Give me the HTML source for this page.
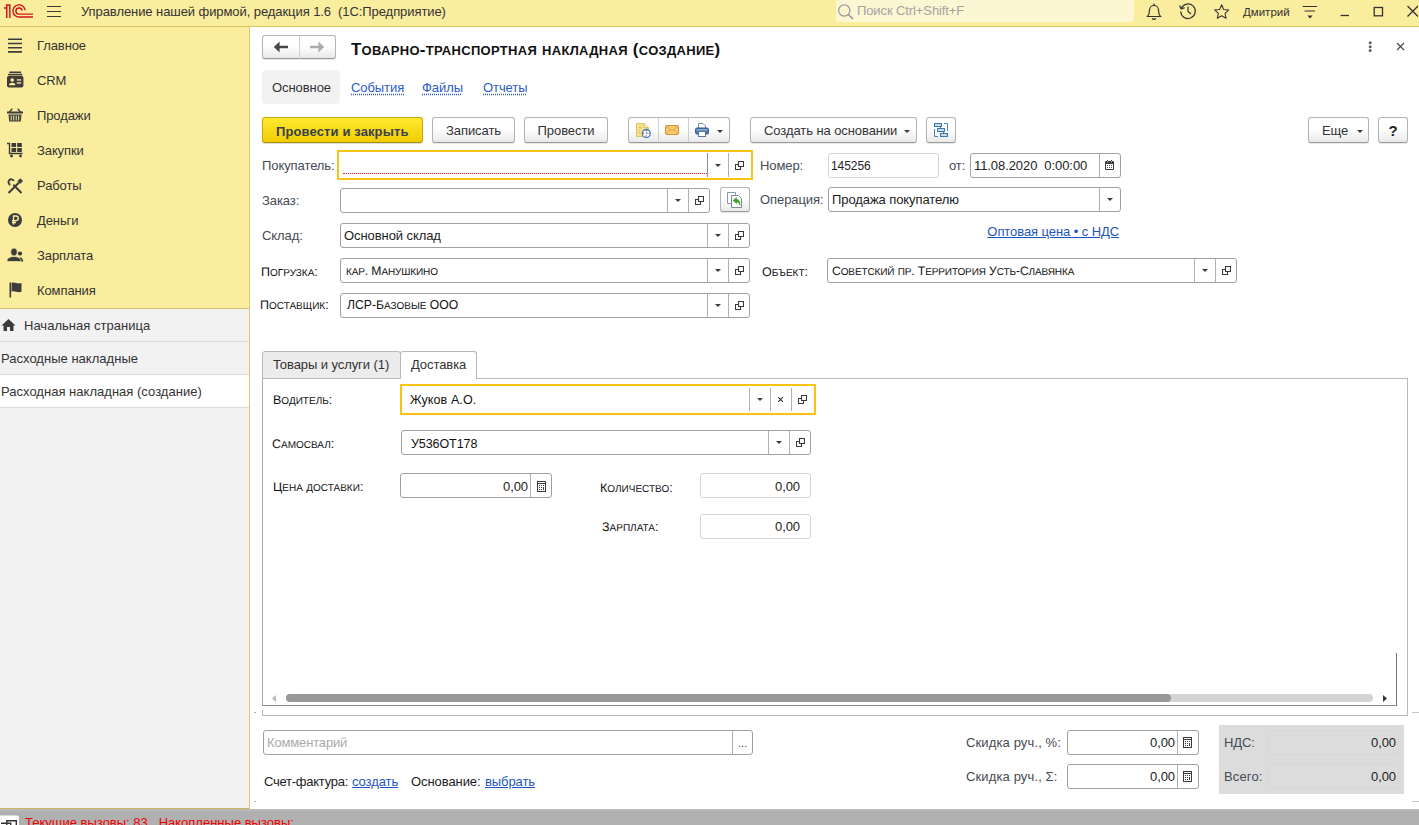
<!DOCTYPE html>
<html lang="ru"><head><meta charset="utf-8"><title>1C</title>
<style>
*{box-sizing:border-box;margin:0;padding:0}
html,body{width:1419px;height:825px;overflow:hidden;background:#fff}
body{font-family:"Liberation Sans",sans-serif;font-size:13px;color:#333;position:relative}
.a{position:absolute;white-space:nowrap}
#top{left:0;top:0;width:1419px;height:27px;background:#fbed9e;border-bottom:1px solid #d9c566}
#side{left:0;top:27px;width:249px;height:281px;background:#fbed9e}
#sideb{left:0;top:308px;width:250px;height:501px;background:#f2f2f2;border-top:1px solid #d2c27a;border-bottom:1px solid #c9b65e}
#sider{left:249px;top:27px;width:1px;height:782px;background:#dccb72}
#status{left:0;top:809px;width:1419px;height:16px;background:linear-gradient(#bdbdbd,#b0b0b0 3px)}
.mi{left:37px;font-size:13px;color:#333;line-height:16px;margin-top:1px;letter-spacing:-0.1px}
.wr{left:0;width:249px;height:33px;border-bottom:1px solid #dcdcdc;font-size:13px;line-height:34px;color:#333;letter-spacing:0.02px}
.inp{border:1px solid #a0a0a0;border-radius:3px;background:#fff;height:25px}
.btn{border:1px solid #b4b4b4;border-bottom-color:#9a9a9a;border-radius:3px;background:linear-gradient(#fff 0%,#fff 45%,#e9e9e9 100%);height:26px;font-size:13px;line-height:25px;text-align:center;color:#333;box-shadow:0 1px 1px rgba(0,0,0,0.10);letter-spacing:-0.08px}
.lnk{color:#1d55c0;text-decoration:underline;font-size:13px;line-height:16px}

.t{font-size:13px;line-height:16px;color:#333;letter-spacing:-0.08px}
.lb{color:#454a55}
.fv{color:#222}
.fvb{color:#111;font-size:12.500px}
.dl{color:#2a5bc8;text-decoration:underline dotted;text-underline-offset:2px}
.ul{color:#1d55c0;text-decoration:underline}
.dv{width:1px;background:#b0b0b0}
.scl{color:#111;font-size:10px;letter-spacing:0;text-transform:uppercase;text-rendering:geometricPrecision}
.scl .p,.scl .w::first-letter{font-size:12.500px}
.scv{color:#111;font-size:10px;letter-spacing:-0.12px;text-transform:uppercase;text-rendering:geometricPrecision}
.scv .p,.scv .w::first-letter{font-size:12.200px}
.w{display:inline-block}
.p{text-rendering:auto}
.ttl{font-size:12.320px;text-transform:uppercase;font-weight:bold;color:#111;line-height:20px;letter-spacing:0.3px;transform:scaleX(1.054);transform-origin:0 0}
.ttl .p,.ttl .w::first-letter{font-size:16px}
</style></head><body>
<div class="a" id="top"></div>
<div class="a" id="side"></div>
<div class="a" id="sideb"></div>
<div class="a" id="sider"></div>
<div class="a" id="status"></div>

<svg class="a" style="left:0;top:0" width="36" height="22" viewBox="0 0 36 22" fill="none" stroke="#d8131b" stroke-width="1.450"><path d="M3.900 7.900H6.750M6.750 4.900V18.100M9.850 4.900V18.100M5.900 4.900H10.700"/><path d="M25 10.300A6.050 6.050 0 1 0 18.900 16.950H33"/><path d="M22 10.800A3.050 3.050 0 1 0 18.900 14.100H33"/></svg>
<svg class="a" style="left:46px;top:4px" width="16" height="14" viewBox="0 0 16 14" stroke="#3a3a3a" stroke-width="1.200"><path d="M1 2.500H15M1 7.500H15M1 12.500H15"/></svg>
<div class="a" style="left:81px;top:3px;font-size:13px;line-height:18px;color:#333;letter-spacing:-0.075px">Управление нашей фирмой, редакция 1.6&nbsp; (1С:Предприятие)</div>
<div class="a" style="left:836px;top:0;width:298px;height:22px;background:#fdf6d2;border-radius:0 0 3px 3px"></div>
<svg class="a" style="left:836px;top:2px" width="20" height="20" viewBox="0 0 20 20" fill="none" stroke="#999" stroke-width="1.2"><circle cx="8.300" cy="8.500" r="5.600"/><path d="M12.300 12.500L17 16.800" stroke-width="1.600"/></svg>
<div class="a" style="left:857px;top:2px;font-size:13px;line-height:18px;color:#a3a3a3;letter-spacing:-0.1px">Поиск Ctrl+Shift+F</div>
<svg class="a" style="left:1144px;top:1px" width="20" height="20" viewBox="0 0 20 20" fill="none" stroke="#333" stroke-width="1.2"><path d="M3.5 15.5 H16.5 C14.5 13.5 14.5 12 14.5 9 A4.5 4.5 0 0 0 5.5 9 C5.5 12 5.500 13.5 3.5 15.5Z"/><path d="M8.3 17.2 A1.8 1.8 0 0 0 11.7 17.2"/><path d="M10 4.5V2.5"/></svg>
<svg class="a" style="left:1178px;top:1px" width="20" height="20" viewBox="0 0 20 20" fill="none" stroke="#333" stroke-width="1.2"><path d="M3.2 7.5 A7.3 7.3 0 1 1 2.7 10.5"/><path d="M1.5 4.5 L3.2 8 L6.6 6.6"/><path d="M10 5.5V10.5L13 13"/></svg>
<svg class="a" style="left:1213px;top:3px" width="17.400" height="17.400" viewBox="0 0 20 20" fill="none" stroke="#333" stroke-width="1.2" stroke-linejoin="round"><path d="M10 2 L12.4 7.4 L18.2 8 L13.8 11.9 L15.1 17.6 L10 14.6 L4.9 17.6 L6.2 11.9 L1.8 8 L7.600 7.4Z"/></svg>
<div class="a" style="left:1243px;top:3px;font-size:11.500px;line-height:18px;color:#333">Дмитрий</div>
<svg class="a" style="left:1301px;top:3px" width="18" height="18" viewBox="0 0 18 18" stroke="#333" stroke-width="1.2" fill="#333"><path d="M1.600 3.500H16M3.600 8H14" fill="none"/><path d="M6.400 12.600 H11.600 L9 15.400Z" stroke="none"/></svg>
<svg class="a" style="left:1336px;top:3px" width="18" height="18" viewBox="0 0 18 18" stroke="#333" stroke-width="1.300"><path d="M4.600 12.500H13"/></svg>
<svg class="a" style="left:1370px;top:4px" width="18" height="18" viewBox="0 0 18 18" stroke="#333" stroke-width="1.300" fill="none"><rect x="4.200" y="3.500" width="8.300" height="8.300"/></svg>
<svg class="a" style="left:1404px;top:3px" width="14" height="18" viewBox="0 0 14 18" stroke="#333" stroke-width="1.3" fill="none"><path d="M3.500 3L14 13.500M3.500 13.500L14 3"/></svg>


<svg class="a" style="left:7px;top:37px" width="16" height="16" viewBox="0 0 16 16" stroke="#3c3c3c" stroke-width="1.600"><path d="M1 2.300H15M1 6.500H15M1 10.700H15M1 14.900H15"/></svg>
<div class="a mi" style="top:37px">Главное</div>
<svg class="a" style="left:6px;top:70px" width="18" height="18" viewBox="0 0 18 18" fill="#3c3c3c"><rect x="3.300" y="1.600" width="11.800" height="1.500" rx="0.500"/><rect x="2" y="3.700" width="14.400" height="1.600" rx="0.500"/><rect x="1" y="5.800" width="16.400" height="11.600" rx="2"/><g fill="#fbed9e"><circle cx="6.200" cy="10" r="1.800"/><path d="M3 15.200C3 12 9.400 12 9.400 15.200Z"/><rect x="10.800" y="9.300" width="4.400" height="1.300"/><rect x="10.800" y="12.300" width="4.400" height="1.300"/></g></svg>
<div class="a mi" style="top:72px">CRM</div>
<svg class="a" style="left:6px;top:106px" width="18" height="18" viewBox="0 0 18 18" fill="#3c3c3c"><path d="M3 6.500L6.300 2.800M15 6.500L11.700 2.800" fill="none" stroke="#3c3c3c" stroke-width="1.300"/><rect x="1" y="5.500" width="16" height="2"/><path d="M2.500 8.500 H15.500 L14.800 15.500 H3.200Z M4.700 9.500V14.500H5.700V9.500Z M7.200 9.500V14.500H8.200V9.500Z M9.700 9.500V14.500H10.700V9.500Z M12.200 9.500V14.500H13.200V9.500Z" fill-rule="evenodd"/></svg>
<div class="a mi" style="top:107px">Продажи</div>
<svg class="a" style="left:6px;top:141px" width="18" height="18" viewBox="0 0 18 18" fill="#3c3c3c"><path d="M1 2.500 H3.500 V12.500 H16.500" fill="none" stroke="#3c3c3c" stroke-width="1.400"/><rect x="5.500" y="2" width="4.600" height="4"/><rect x="11.200" y="2" width="4.600" height="4"/><rect x="5.500" y="7" width="4.600" height="4"/><rect x="11.200" y="7" width="4.600" height="4"/><circle cx="5.500" cy="15" r="1.400"/><circle cx="14.500" cy="15" r="1.400"/></svg>
<div class="a mi" style="top:142px">Закупки</div>
<svg class="a" style="left:6px;top:177px" width="18" height="18" viewBox="0 0 18 18" fill="none" stroke="#3c3c3c"><path d="M2.500 16L12.800 5.700" stroke-width="2"/><path d="M11.800 4.200L14.300 1.700L16.600 4L14.100 6.500Z" fill="#3c3c3c" stroke-width="0.800"/><path d="M15.500 16L7.300 7.800" stroke-width="2"/><path d="M7.800 4A2.800 2.800 0 1 0 4.400 7.800" stroke-width="1.900"/></svg>
<div class="a mi" style="top:177px">Работы</div>
<svg class="a" style="left:7px;top:212px" width="16" height="16" viewBox="0 0 16 16"><circle cx="8" cy="8" r="7" fill="#3c3c3c"/><path d="M6.500 12.500 V4 H9 A2.300 2.300 0 0 1 9 8.600 H5 M5 10.500 H9" fill="none" stroke="#fbed9e" stroke-width="1.400"/></svg>
<div class="a mi" style="top:212px">Деньги</div>
<svg class="a" style="left:5px;top:246px" width="20" height="18" viewBox="0 0 20 18" fill="#3c3c3c"><circle cx="15" cy="7.500" r="2.100"/><path d="M13 15.500C13 10.500 17.500 10 18.300 15.500Z"/><ellipse cx="9" cy="6" rx="3.300" ry="3.900" stroke="#fbed9e" stroke-width="0.700"/><path d="M2 15.500C2 11.500 4.500 11.800 7 10.500H11C13.500 11.800 16 11.500 16 15.500Z" stroke="#fbed9e" stroke-width="0.700"/></svg>
<div class="a mi" style="top:247px">Зарплата</div>
<svg class="a" style="left:8px;top:281px" width="16" height="18" viewBox="0 0 16 18" fill="#3c3c3c"><rect x="1.500" y="1.500" width="1.600" height="15"/><path d="M3.600 2C7 0.500 9 3.500 13.500 2V10.800C9 12.300 7 9.300 3.600 10.800Z"/></svg>
<div class="a mi" style="top:282px">Компания</div>
<div class="a wr" style="top:309px;height:33px"><svg class="a" style="left:1px;top:9px" width="15" height="14" viewBox="0 0 15 14" fill="#3c3c3c"><path d="M7.500 1 L14.500 7.500 H12.500 V13 H9 V9 H6 V13 H2.500 V7.500 H0.500Z"/></svg><span class="a" style="left:24px;top:0">Начальная страница</span></div>
<div class="a wr" style="top:342px"><span class="a" style="left:1px;top:0">Расходные накладные</span></div>
<div class="a wr" style="top:375px;background:#fff"><span class="a" style="left:1px;top:0">Расходная накладная (создание)</span></div>
<svg class="a" style="left:0;top:815px" width="20" height="10" viewBox="0 0 20 10"><path d="M0 0.500H16.500Q19 0.500 19 3V10H0Z" fill="#fff"/><path d="M6.800 10V5.700H16.300V10" fill="none" stroke="#333" stroke-width="1.400"/><path d="M1 8.300H10.700V10" fill="none" stroke="#333" stroke-width="1.400"/></svg>
<div class="a" style="left:25px;top:815px;font-size:13px;line-height:16px;color:#f00000">Текущие вызовы: 83&nbsp;&nbsp; Накопленные вызовы:</div>

<div class="a btn" style="left:262px;top:35px;width:74px;height:24px;"></div>
<div class="a" style="left:299px;top:36px;width:1px;height:23px;background:#d0d0d0"></div>
<svg class="a" style="left:273px;top:41px" width="16" height="12" viewBox="0 0 16 12" fill="#484848"><path d="M0.800 6L6.600 0.500V4.700H15V7.300H6.600V11.500Z"/></svg>
<svg class="a" style="left:309px;top:41px" width="16" height="12" viewBox="0 0 16 12" fill="#ababab"><path d="M15.200 6L9.400 0.500V4.700H1V7.300H9.400V11.500Z"/></svg>
<div class="a ttl" style="left:351px;top:40px"><span class="w">Товарно</span><span class="p">-</span>транспортная<span class="p"> </span>накладная<span class="p"> (</span>создание<span class="p">)</span></div>
<svg class="a" style="left:1367px;top:41px" width="6" height="12" viewBox="0 0 6 12" fill="#606060"><circle cx="3.200" cy="1.800" r="1.500"/><circle cx="3.200" cy="5.700" r="1.500"/><circle cx="3.200" cy="9.600" r="1.500"/></svg>
<svg class="a" style="left:1396px;top:42px" width="9" height="9" viewBox="0 0 9 9" stroke="#444" stroke-width="1.100"><path d="M1 1L8 8M8 1L1 8"/></svg>
<div class="a" style="left:262px;top:70px;width:78px;height:34px;background:#f2f2f2;border-radius:4px"></div>
<div class="a t " style="left:272px;top:80px;">Основное</div>
<div class="a t dl" style="left:351px;top:80px;">События</div>
<div class="a t dl" style="left:422px;top:80px;">Файлы</div>
<div class="a t dl" style="left:483px;top:80px;">Отчеты</div>
<div class="a btn" style="left:262px;top:117px;width:161px;height:26px;background:linear-gradient(#ffe930,#f0cd00);border-color:#c5a700;box-shadow:0 1px 1px rgba(0,0,0,0.15);border-bottom-color:#a88f00"></div>
<div class="a t " style="left:276px;top:124px;font-weight:bold;color:#3a3f4c;letter-spacing:0.12px">Провести и закрыть</div>
<div class="a btn" style="left:432px;top:117px;width:83px;height:26px;">Записать</div>
<div class="a btn" style="left:524px;top:117px;width:84px;height:26px;">Провести</div>
<div class="a btn" style="left:628px;top:117px;width:102px;height:26px;"></div>
<div class="a" style="left:658px;top:118px;width:1px;height:24px;background:#cfcfcf"></div><div class="a" style="left:688px;top:118px;width:1px;height:24px;background:#cfcfcf"></div>
<svg class="a" style="left:636px;top:123px" width="16" height="15" viewBox="0 0 16 15"><path d="M0.500 0.500H8L12.500 4.500V13.500H0.500Z" fill="#f5e08f" stroke="#dcc46a"/><path d="M8 0.500V4.500H12.500" fill="#fbf0c0" stroke="#dcc46a"/><path d="M2.500 4.500H5M2.500 7H4.500M2.500 9.500H4" stroke="#d9bf62" stroke-width="1"/><circle cx="10.300" cy="10.100" r="4" fill="#fff" stroke="#3b7fc4" stroke-width="1.300" transform="translate(0 .4)"/><path d="M10.300 8.400V10.500H12" stroke="#5a8fd0" stroke-width="0.900" fill="none"/><g fill="#e02828"><circle cx="10.300" cy="7.300" r="0.600"/><circle cx="10.300" cy="12.900" r="0.600"/><circle cx="7.500" cy="10.100" r="0.600"/><circle cx="13.100" cy="10.100" r="0.600"/></g></svg>
<svg class="a" style="left:665px;top:125px" width="14" height="10" viewBox="0 0 14 10"><rect x="0.500" y="0.500" width="13" height="9" rx="1" fill="#f8ca72" stroke="#d1952c"/><path d="M1 1L7 6L13 1M1 9L5 4.600M13 9L9 4.600" fill="none" stroke="#d8a040" stroke-width="0.900"/></svg>
<svg class="a" style="left:695px;top:123px" width="14" height="14" viewBox="0 0 14 14"><path d="M3.500 5V0.500H8L10.500 3V5" fill="#fff" stroke="#7a8ea6"/><rect x="0.500" y="5" width="13" height="6" rx="1.500" fill="#4a78aa" stroke="#2f5a8c"/><rect x="1.500" y="6.300" width="11" height="1.200" fill="#9fbbd8"/><rect x="3.500" y="8.500" width="7" height="5" fill="#fff" stroke="#5a7694"/></svg>
<svg class="a" style="left:717.2px;top:130px" width="6" height="3" viewBox="0 0 6 3"><path d="M0 0H6L3 3Z" fill="#3c3c3c"/></svg>
<div class="a btn" style="left:750px;top:117px;width:167px;height:26px;"></div>
<div class="a t " style="left:764px;top:123px;">Создать на основании</div>
<svg class="a" style="left:903.5px;top:130px" width="6" height="3" viewBox="0 0 6 3"><path d="M0 0H6L3 3Z" fill="#3c3c3c"/></svg>
<div class="a btn" style="left:926px;top:117px;width:30px;height:26px;"></div>
<svg class="a" style="left:934px;top:123px" width="14" height="14" viewBox="0 0 14 14" fill="none" stroke="#3e78a8" stroke-width="1"><path d="M10 0.500H13.500V8M0.500 6V13.500H4" stroke="#4a84b2"/><rect x="0.500" y="0.500" width="7" height="3" fill="#c3d9ea"/><rect x="3.500" y="5.500" width="7" height="3" fill="#c3d9ea"/><rect x="6.500" y="10.500" width="7" height="3" fill="#c3d9ea"/><path d="M6.500 4V5M9.500 9V10"/></svg>
<div class="a btn" style="left:1308px;top:117px;width:61px;height:26px;"></div>
<div class="a t " style="left:1322px;top:123px;">Еще</div>
<svg class="a" style="left:1356.5px;top:130px" width="6" height="3" viewBox="0 0 6 3"><path d="M0 0H6L3 3Z" fill="#3c3c3c"/></svg>
<div class="a btn" style="left:1378px;top:117px;width:30px;height:26px;"><b style="color:#222;font-size:15px">?</b></div>
<div class="a t lb" style="left:262px;top:158px;">Покупатель:</div>
<div class="a" style="left:337px;top:150px;width:416px;height:30px;border:2px solid #f7c315;background:#fff"></div>
<div class="a" style="left:343px;top:173px;width:364px;height:1px;border-top:1px dotted #e02020"></div>
<div class="a dv" style="left:707px;top:153px;height:24px;background:#909090"></div><div class="a dv" style="left:728px;top:153px;height:24px"></div>
<svg class="a" style="left:714.5px;top:164px" width="6" height="3" viewBox="0 0 6 3"><path d="M0 0H6L3 3Z" fill="#3c3c3c"/></svg>
<svg class="a" style="left:735px;top:161px" width="9" height="9" viewBox="0 0 9 9" fill="none" stroke="#3a3a3a" stroke-width="1.100"><path d="M3.500 0.500H8.500V5.500H3.500Z"/><path d="M3.500 3.500H0.500V8.500H5.500V5.500"/></svg>
<div class="a t lb" style="left:760px;top:158px;">Номер:</div>
<div class="a inp" style="left:828px;top:153px;width:111px;height:25px;border-color:#d4d4d4"></div>
<div class="a t fv" style="left:831px;top:158px;font-size:12px">145256</div>
<div class="a t lb" style="left:949px;top:158px;">от:</div>
<div class="a inp" style="left:970px;top:153px;width:151px;height:25px;"></div><div class="a dv" style="left:1099px;top:154px;height:23px"></div>
<div class="a t fv" style="left:974px;top:158px;">11.08.2020&nbsp; 0:00:00</div>
<svg class="a" style="left:1105px;top:160px" width="9" height="10" viewBox="0 0 9 10" fill="#3a3a3a"><rect x="2" y="0" width="1" height="2"/><rect x="6" y="0" width="1" height="2"/><rect x="0" y="1" width="9" height="9" rx="1"/><g fill="#fff"><circle cx="2.500" cy="1.800" r="0.550"/><circle cx="6.500" cy="1.800" r="0.550"/><rect x="1" y="4" width="7" height="5"/></g><circle cx="2.500" cy="5.500" r="0.550"/><circle cx="4.500" cy="5.500" r="0.550"/><circle cx="6.500" cy="5.500" r="0.550"/><circle cx="2.500" cy="7.500" r="0.550"/><circle cx="4.500" cy="7.500" r="0.550"/><circle cx="6.500" cy="7.500" r="0.550"/></svg>
<div class="a t lb" style="left:262px;top:193px;">Заказ:</div>
<div class="a inp" style="left:340px;top:188px;width:370px;height:25px;"></div><div class="a dv" style="left:667px;top:189px;height:23px"></div><div class="a dv" style="left:688px;top:189px;height:23px"></div>
<svg class="a" style="left:674.5px;top:199px" width="6" height="3" viewBox="0 0 6 3"><path d="M0 0H6L3 3Z" fill="#3c3c3c"/></svg>
<svg class="a" style="left:695px;top:196px" width="9" height="9" viewBox="0 0 9 9" fill="none" stroke="#3a3a3a" stroke-width="1.100"><path d="M3.500 0.500H8.500V5.500H3.500Z"/><path d="M3.500 3.500H0.500V8.500H5.500V5.500"/></svg>
<div class="a btn" style="left:720px;top:187px;width:30px;height:25px;"></div>
<svg class="a" style="left:727px;top:192px" width="16" height="16" viewBox="0 0 16 16"><path d="M0.500 0.500H8.500V11.500H0.500Z" fill="#fff" stroke="#8a9aa8"/><path d="M4.500 3.500H11.500L14.500 6.500V15.500H4.500Z" fill="#fff" stroke="#7a8a98"/><path d="M6 8.500L9.500 5.500V7.500C12.500 7.500 13 10 13 13.500C12 11 11.500 10 9.500 10V11.500Z" fill="#3aa820" stroke="#2c8a14" stroke-width="0.400"/></svg>
<div class="a t lb" style="left:760px;top:192px;">Операция:</div>
<div class="a inp" style="left:828px;top:187px;width:293px;height:25px;"></div><div class="a dv" style="left:1099px;top:188px;height:23px"></div>
<div class="a t fv" style="left:832px;top:192px;">Продажа покупателю</div>
<svg class="a" style="left:1106.5px;top:198px" width="6" height="3" viewBox="0 0 6 3"><path d="M0 0H6L3 3Z" fill="#3c3c3c"/></svg>
<div class="a t lb" style="left:262px;top:228px;">Склад:</div>
<div class="a inp" style="left:340px;top:223px;width:410px;height:25px;"></div><div class="a dv" style="left:707px;top:224px;height:23px"></div><div class="a dv" style="left:728px;top:224px;height:23px"></div>
<div class="a t fv" style="left:344px;top:228px;">Основной склад</div>
<svg class="a" style="left:714.5px;top:234px" width="6" height="3" viewBox="0 0 6 3"><path d="M0 0H6L3 3Z" fill="#3c3c3c"/></svg>
<svg class="a" style="left:735px;top:231px" width="9" height="9" viewBox="0 0 9 9" fill="none" stroke="#3a3a3a" stroke-width="1.100"><path d="M3.500 0.500H8.500V5.500H3.500Z"/><path d="M3.500 3.500H0.500V8.500H5.500V5.500"/></svg>
<div class="a t ul" style="right:300px;top:224px;">Оптовая цена • с НДС</div>
<div class="a t scl" style="left:261px;top:264px;"><span class="w">Погрузка</span><span class="p">:</span></div>
<div class="a inp" style="left:340px;top:258px;width:410px;height:25px;"></div><div class="a dv" style="left:707px;top:259px;height:23px"></div><div class="a dv" style="left:728px;top:259px;height:23px"></div>
<div class="a t scv" style="left:346px;top:263px;">кар<span class="p">. </span><span class="w">Манушкино</span></div>
<svg class="a" style="left:714.5px;top:269px" width="6" height="3" viewBox="0 0 6 3"><path d="M0 0H6L3 3Z" fill="#3c3c3c"/></svg>
<svg class="a" style="left:735px;top:266px" width="9" height="9" viewBox="0 0 9 9" fill="none" stroke="#3a3a3a" stroke-width="1.100"><path d="M3.500 0.500H8.500V5.500H3.500Z"/><path d="M3.500 3.500H0.500V8.500H5.500V5.500"/></svg>
<div class="a t scl" style="left:762px;top:264px;"><span class="w">Объект</span><span class="p">:</span></div>
<div class="a inp" style="left:827px;top:258px;width:410px;height:25px;"></div><div class="a dv" style="left:1194px;top:259px;height:23px"></div><div class="a dv" style="left:1215px;top:259px;height:23px"></div>
<div class="a t scv" style="left:832px;top:263px;"><span class="w">Советский</span><span class="p"> </span>пр<span class="p">. </span><span class="w">Территория</span><span class="p"> </span><span class="w">Усть</span><span class="p">-</span><span class="w">Славянка</span></div>
<svg class="a" style="left:1201.5px;top:269px" width="6" height="3" viewBox="0 0 6 3"><path d="M0 0H6L3 3Z" fill="#3c3c3c"/></svg>
<svg class="a" style="left:1222px;top:266px" width="9" height="9" viewBox="0 0 9 9" fill="none" stroke="#3a3a3a" stroke-width="1.100"><path d="M3.500 0.500H8.500V5.500H3.500Z"/><path d="M3.500 3.500H0.500V8.500H5.500V5.500"/></svg>
<div class="a t scl" style="left:260px;top:297px;"><span class="w">Поставщик</span><span class="p">:</span></div>
<div class="a inp" style="left:340px;top:293px;width:410px;height:25px;"></div><div class="a dv" style="left:707px;top:294px;height:23px"></div><div class="a dv" style="left:728px;top:294px;height:23px"></div>
<div class="a t scv" style="left:347px;top:297px;letter-spacing:0"><span class="p">ЛСР-</span><span class="w">Базовые</span><span class="p"> ООО</span></div>
<svg class="a" style="left:714.5px;top:304px" width="6" height="3" viewBox="0 0 6 3"><path d="M0 0H6L3 3Z" fill="#3c3c3c"/></svg>
<svg class="a" style="left:735px;top:301px" width="9" height="9" viewBox="0 0 9 9" fill="none" stroke="#3a3a3a" stroke-width="1.100"><path d="M3.500 0.500H8.500V5.500H3.500Z"/><path d="M3.500 3.500H0.500V8.500H5.500V5.500"/></svg>
<div class="a" style="left:262px;top:378px;width:1146px;height:338px;border:1px solid #b8b8b8;border-left:none"></div>
<div class="a" style="left:262px;top:378px;width:1px;height:328px;background:#a8a8a8"></div><div class="a" style="left:262px;top:710px;width:1px;height:6px;background:#b8b8b8"></div>
<div class="a" style="left:262px;top:351px;width:139px;height:28px;background:#ececec;border:1px solid #b8b8b8;border-radius:3px 3px 0 0"></div>
<div class="a" style="left:400px;top:351px;width:77px;height:28px;background:#fff;border:1px solid #b8b8b8;border-bottom:none;border-radius:3px 3px 0 0"></div>
<div class="a t " style="left:273px;top:357px;">Товары и услуги (1)</div>
<div class="a t " style="left:411px;top:357px;">Доставка</div>
<div class="a" style="left:262px;top:379px;width:1135px;height:327px;border-bottom:1px solid #888"></div>
<div class="a" style="left:1396px;top:653px;width:1px;height:53px;background:#777"></div>
<div class="a t scl" style="left:273px;top:392px;"><span class="w">Водитель</span><span class="p">:</span></div>
<div class="a" style="left:400px;top:384px;width:416px;height:31px;border:2px solid #f7c315;background:#fff"></div>
<div class="a dv" style="left:749px;top:388px;height:23px"></div>
<div class="a dv" style="left:770px;top:388px;height:23px"></div>
<div class="a dv" style="left:791px;top:388px;height:23px"></div>
<div class="a t fvb" style="left:410px;top:392px;letter-spacing:0.1px">Жуков А.О.</div>
<svg class="a" style="left:756.5px;top:398px" width="6" height="3" viewBox="0 0 6 3"><path d="M0 0H6L3 3Z" fill="#3c3c3c"/></svg>
<svg class="a" style="left:778px;top:397px" width="5" height="5" viewBox="0 0 5 5" stroke="#333" stroke-width="1.100"><path d="M0 0L5 5M5 0L0 5"/></svg>
<svg class="a" style="left:798px;top:395px" width="9" height="9" viewBox="0 0 9 9" fill="none" stroke="#3a3a3a" stroke-width="1.100"><path d="M3.500 0.500H8.500V5.500H3.500Z"/><path d="M3.500 3.500H0.500V8.500H5.500V5.500"/></svg>
<div class="a t scl" style="left:272px;top:436px;"><span class="w">Самосвал</span><span class="p">:</span></div>
<div class="a inp" style="left:401px;top:430px;width:410px;height:25px;"></div><div class="a dv" style="left:768px;top:431px;height:23px"></div><div class="a dv" style="left:789px;top:431px;height:23px"></div>
<div class="a t fvb" style="left:411px;top:436px;">У536ОТ178</div>
<svg class="a" style="left:775.5px;top:441px" width="6" height="3" viewBox="0 0 6 3"><path d="M0 0H6L3 3Z" fill="#3c3c3c"/></svg>
<svg class="a" style="left:796px;top:438px" width="9" height="9" viewBox="0 0 9 9" fill="none" stroke="#3a3a3a" stroke-width="1.100"><path d="M3.500 0.500H8.500V5.500H3.500Z"/><path d="M3.500 3.500H0.500V8.500H5.500V5.500"/></svg>
<div class="a t scl" style="left:273px;top:479px;"><span class="w">Цена</span><span class="p"> </span>доставки<span class="p">:</span></div>
<div class="a inp" style="left:400px;top:473px;width:152px;height:25px;"></div><div class="a dv" style="left:530px;top:474px;height:23px"></div>
<div class="a t fv" style="right:891px;top:479px;">0,00</div>
<svg class="a" style="left:537px;top:481px" width="9" height="11" viewBox="0 0 9 11"><rect x="0.500" y="0.500" width="8" height="10" fill="#fff" stroke="#3a3a3a"/><rect x="1" y="2" width="7" height="1" fill="#3a3a3a"/><g fill="#3a3a3a"><rect x="2" y="4" width="1" height="1"/><rect x="4" y="4" width="1" height="1"/><rect x="6" y="4" width="1" height="1"/><rect x="2" y="6" width="1" height="1"/><rect x="4" y="6" width="1" height="1"/><rect x="2" y="8" width="1" height="1"/><rect x="4" y="8" width="1" height="1"/><rect x="6" y="6" width="1" height="3"/></g></svg>
<div class="a t scl" style="left:600px;top:480px;"><span class="w">Количество</span><span class="p">:</span></div>
<div class="a inp" style="left:700px;top:473px;width:111px;height:25px;border-color:#d4d4d4"></div>
<div class="a t fv" style="right:619px;top:479px;">0,00</div>
<div class="a t scl" style="left:602px;top:519px;"><span class="w">Зарплата</span><span class="p">:</span></div>
<div class="a inp" style="left:700px;top:514px;width:111px;height:25px;border-color:#d4d4d4"></div>
<div class="a t fv" style="right:619px;top:519px;">0,00</div>
<div class="a" style="left:286px;top:694px;width:1087px;height:8px;border-radius:4px;background:#d4d4d4"></div>
<div class="a" style="left:286px;top:694px;width:885px;height:8px;border-radius:4px;background:#999"></div>
<svg class="a" style="left:272px;top:695px" width="4" height="7" viewBox="0 0 4 7"><path d="M4 0V7L0 3.500Z" fill="#bbb"/></svg>
<svg class="a" style="left:1383px;top:695px" width="4" height="7" viewBox="0 0 4 7"><path d="M0 0V7L4 3.500Z" fill="#333"/></svg>
<div class="a" style="left:1412px;top:712px;width:7px;height:1px;background:#c4c4cc"></div><div class="a" style="left:1412px;top:801px;width:7px;height:1px;background:#c4c4cc"></div>
<div class="a" style="left:254px;top:712px;width:2px;height:1px;background:#b0b0b0"></div><div class="a" style="left:254px;top:801px;width:2px;height:1px;background:#b0b0b0"></div>
<div class="a inp" style="left:263px;top:730px;width:490px;height:25px;"></div><div class="a dv" style="left:732px;top:731px;height:23px"></div>
<div class="a t " style="left:267px;top:735px;color:#aaa;letter-spacing:-0.15px">Комментарий</div>
<div class="a t " style="left:738px;top:735px;font-size:11px;color:#444">...</div>
<div class="a t " style="left:264px;top:774px;color:#222;letter-spacing:-0.25px">Счет-фактура:</div>
<div class="a t ul" style="left:352px;top:774px;">создать</div>
<div class="a t " style="left:411px;top:774px;color:#222">Основание:</div>
<div class="a t ul" style="left:485px;top:774px;">выбрать</div>
<div class="a t lb" style="left:966px;top:735px;letter-spacing:0.13px">Скидка руч., %:</div>
<div class="a inp" style="left:1067px;top:730px;width:132px;height:25px;"></div><div class="a dv" style="left:1177px;top:731px;height:23px"></div>
<div class="a t fv" style="right:244px;top:735px;">0,00</div>
<svg class="a" style="left:1183px;top:737px" width="9" height="11" viewBox="0 0 9 11"><rect x="0.500" y="0.500" width="8" height="10" fill="#fff" stroke="#3a3a3a"/><rect x="1" y="2" width="7" height="1" fill="#3a3a3a"/><g fill="#3a3a3a"><rect x="2" y="4" width="1" height="1"/><rect x="4" y="4" width="1" height="1"/><rect x="6" y="4" width="1" height="1"/><rect x="2" y="6" width="1" height="1"/><rect x="4" y="6" width="1" height="1"/><rect x="2" y="8" width="1" height="1"/><rect x="4" y="8" width="1" height="1"/><rect x="6" y="6" width="1" height="3"/></g></svg>
<div class="a t lb" style="left:966px;top:769px;letter-spacing:0.13px">Скидка руч., Σ:</div>
<div class="a inp" style="left:1067px;top:764px;width:132px;height:25px;"></div><div class="a dv" style="left:1177px;top:765px;height:23px"></div>
<div class="a t fv" style="right:244px;top:769px;">0,00</div>
<svg class="a" style="left:1183px;top:771px" width="9" height="11" viewBox="0 0 9 11"><rect x="0.500" y="0.500" width="8" height="10" fill="#fff" stroke="#3a3a3a"/><rect x="1" y="2" width="7" height="1" fill="#3a3a3a"/><g fill="#3a3a3a"><rect x="2" y="4" width="1" height="1"/><rect x="4" y="4" width="1" height="1"/><rect x="6" y="4" width="1" height="1"/><rect x="2" y="6" width="1" height="1"/><rect x="4" y="6" width="1" height="1"/><rect x="2" y="8" width="1" height="1"/><rect x="4" y="8" width="1" height="1"/><rect x="6" y="6" width="1" height="3"/></g></svg>
<div class="a" style="left:1219px;top:725px;width:185px;height:69px;background:#dcdcdc"></div>
<div class="a t lb" style="left:1224px;top:735px;">НДС:</div>
<div class="a inp" style="left:1268px;top:730px;width:131px;height:25px;border-color:#d6d6d6;background:#dcdcdc"></div>
<div class="a t fv" style="right:23px;top:735px;">0,00</div>
<div class="a t lb" style="left:1224px;top:769px;letter-spacing:0.15px">Всего:</div>
<div class="a inp" style="left:1268px;top:764px;width:131px;height:25px;border-color:#d6d6d6;background:#dcdcdc"></div>
<div class="a t fv" style="right:23px;top:769px;">0,00</div>
</body></html>
